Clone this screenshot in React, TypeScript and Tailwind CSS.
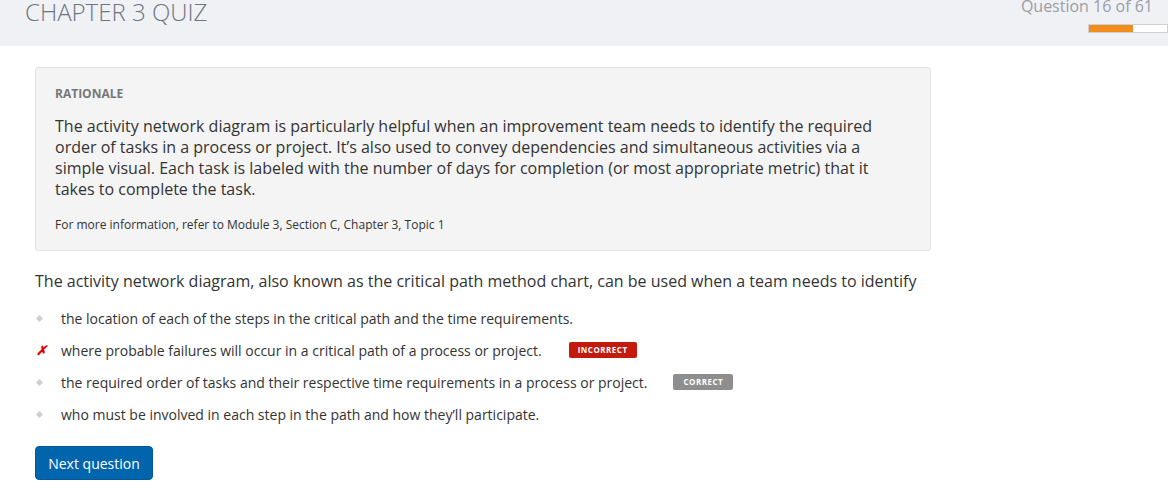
import React from "react";

const options = [
  { text: "the location of each of the steps in the critical path and the time requirements.", mark: "dot" },
  { text: "where probable failures will occur in a critical path of a process or project.", mark: "x", badge: "INCORRECT" },
  { text: "the required order of tasks and their respective time requirements in a process or project.", mark: "dot", badge: "CORRECT" },
  { text: "who must be involved in each step in the path and how they’ll participate.", mark: "dot" },
];

export default function App() {
  return (
    <div className="w-[1168px] h-[491px] bg-white overflow-hidden" style={{ fontFamily: '"Open Sans", sans-serif' }}>
      <div className="h-[46px] bg-[#f0f1f5] flex justify-between">
        <div className="pl-[25px] text-[24px] font-light text-[#6e7581] leading-[24px]">CHAPTER 3 QUIZ</div>
        <div className="flex flex-col items-end">
          <div className="text-[16px] text-[#9a9ea6] leading-[16px] pr-[15px] -mt-[2px]">Question 16 of 61</div>
          <div className="mt-[10px] w-[80px] h-[9px] border border-[#cfd0d4] bg-white ml-auto">
            <div className="w-[44px] h-full bg-[#f28c1c]" />
          </div>
        </div>
      </div>
      <div className="pl-[35px] pt-[21px]">
        <div className="w-[896px] bg-[#f4f4f4] border border-[#e2e2e2] rounded-[3px] px-[19px] pt-[18px] pb-[17px]">
          <div className="text-[12px] font-bold text-[#777] leading-[16px]">RATIONALE</div>
          <div className="mt-[14px] text-[16px] leading-[21px] text-[#333] w-[830px]">
            The activity network diagram is particularly helpful when an improvement team needs to identify the required order of tasks in a process or project. It’s also used to convey dependencies and simultaneous activities via a simple visual. Each task is labeled with the number of days for completion (or most appropriate metric) that it takes to complete the task.
          </div>
          <div className="mt-[17px] text-[12px] leading-[16px] text-[#333]">For more information, refer to Module 3, Section C, Chapter 3, Topic 1</div>
        </div>
        <div className="mt-[19px] text-[16px] leading-[22px] text-[#333]">
          The activity network diagram, also known as the critical path method chart, can be used when a team needs to identify
        </div>
        <div className="mt-[16px] flex flex-col gap-[12px]">
          {options.map((o, i) => (
            <div key={i} className="flex items-center h-[20px]">
              <div className="w-[26px] flex items-center">
                {o.mark === "x" ? (
                  <span className="text-[#e00000] text-[13px] font-bold italic leading-none ml-[1px]">✗</span>
                ) : (
                  <span className="ml-[2px] w-[5px] h-[5px] bg-[#cfcfcf] rotate-45 inline-block" />
                )}
              </div>
              <span className="text-[14px] text-[#333]">{o.text}</span>
              {o.badge === "INCORRECT" && (
                <span className="ml-[27px] bg-[#c41a0b] text-white text-[8px] font-bold tracking-[0.5px] px-[9px] h-[16px] leading-[16px] rounded-[2px]">INCORRECT</span>
              )}
              {o.badge === "CORRECT" && (
                <span className="ml-[26px] bg-[#8e8e8e] text-white text-[8px] font-bold tracking-[0.5px] px-[10px] h-[16px] leading-[16px] rounded-[2px]">CORRECT</span>
              )}
            </div>
          ))}
        </div>
        <button className="mt-[22px] w-[118px] h-[34px] bg-[#0065ad] text-white text-[14px] rounded-[4px] border border-[#005a9a]">Next question</button>
      </div>
    </div>
  );
}
